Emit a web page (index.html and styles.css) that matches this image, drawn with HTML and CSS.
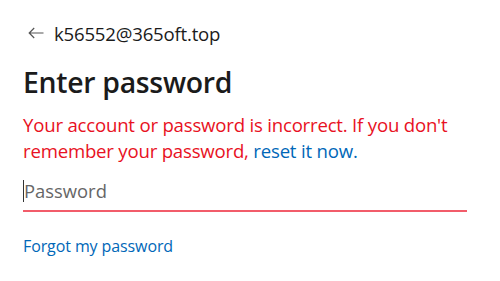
FILE: index.html
```html
<!DOCTYPE html>
<html lang="en">
<head>
<meta charset="utf-8">
<title>Enter password</title>
<link rel="stylesheet" href="styles.css">
</head>
<body>
<main class="signin">
  <div class="identity">
    <button class="back" aria-label="Back">
      <svg width="16" height="12" viewBox="0 0 16 12" aria-hidden="true">
        <path d="M15.5 6H1.2M6.2 1L1.2 6l5 5" fill="none" stroke="#555" stroke-width="1.2"/>
      </svg>
    </button>
    <span class="email">k56552@365oft.top</span>
  </div>
  <h1 class="title">Enter password</h1>
  <p class="error">Your account or password is incorrect. If you don't remember your password, <a href="#" class="link">reset it now.</a></p>
  <div class="field">
    <span class="caret"></span>
    <input class="input" type="password" placeholder="Password">
  </div>
  <a href="#" class="link forgot">Forgot my password</a>
</main>
</body>
</html>
```

FILE: styles.css
```css
html, body {
  margin: 0;
  padding: 0;
  background: #ffffff;
}

body {
  font-family: "Open Sans", "Noto Sans", "Liberation Sans", sans-serif;
  color: #1b1b1b;
}

.signin {
  display: flex;
  flex-direction: column;
  align-items: flex-start;
  padding: 21px 33px 0 23px;
}

.identity {
  display: flex;
  align-items: center;
  gap: 10px;
  height: 24px;
}

.back {
  display: flex;
  align-items: center;
  border: 0;
  background: none;
  padding: 0 0 0 5px;
  margin: 0;
}

.email {
  font-size: 18.6px;
  letter-spacing: -0.2px;
  color: #1b1b1b;
}

.title {
  margin: 19px 0 0;
  font-size: 28.4px;
  line-height: 36px;
  font-weight: 600;
  letter-spacing: -0.3px;
  color: #1b1b1b;
}

.error {
  margin: 12px 0 0;
  font-size: 18.6px;
  line-height: 26px;
  color: #e81123;
  letter-spacing: -0.2px;
}

.link {
  color: #0067b8;
  text-decoration: none;
}

.field {
  position: relative;
  align-self: stretch;
  margin-top: 7px;
  border-bottom: 2px solid #f25c6a;
}

.caret {
  position: absolute;
  left: 0;
  top: 9px;
  width: 1px;
  height: 22px;
  background: #333;
}

.input {
  display: block;
  width: 100%;
  box-sizing: border-box;
  border: 0;
  outline: none;
  padding: 7px 0 7px 1px;
  font-family: inherit;
  font-size: 18.4px;
  line-height: 25px;
  color: #1b1b1b;
  background: transparent;
}

.input::placeholder {
  color: #666666;
}

.forgot {
  margin-top: 23px;
  font-size: 16px;
  letter-spacing: -0.1px;
}
```
